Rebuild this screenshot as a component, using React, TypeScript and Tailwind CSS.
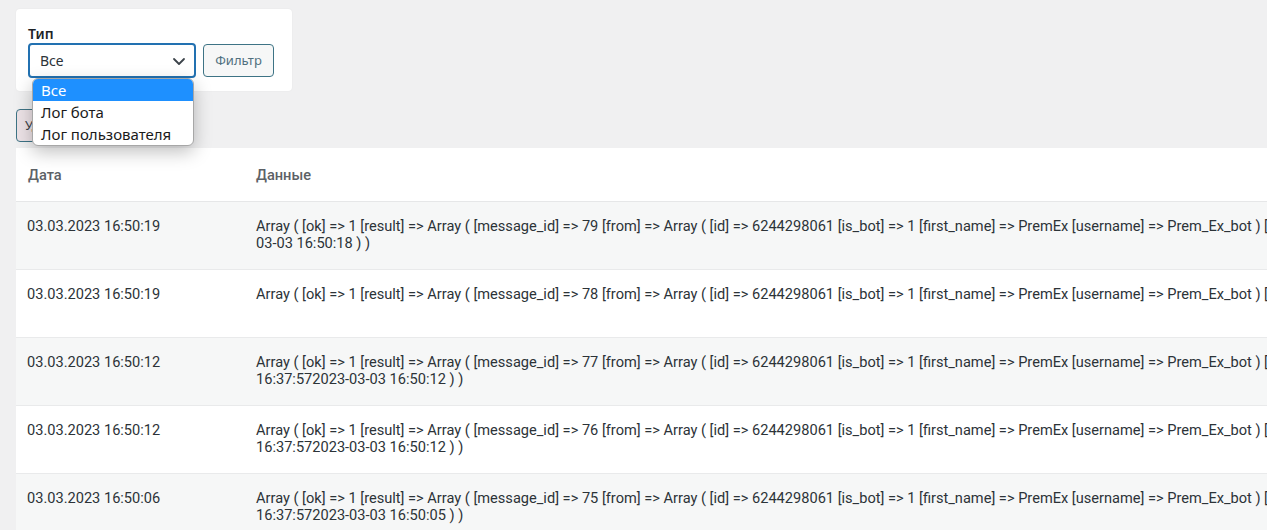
import React from 'react'

const rows = [
  {
    date: '03.03.2023 16:50:19',
    lines: [
      'Array ( [ok] => 1 [result] => Array ( [message_id] => 79 [from] => Array ( [id] => 6244298061 [is_bot] => 1 [first_name] => PremEx [username] => Prem_Ex_bot ) [chat] => Array ( [id] => 5128806401 [first_name] => Денис [type] => private ) [date] => 1677851418 [text] => 2023-',
      '03-03 16:50:18 ) )',
    ],
  },
  {
    date: '03.03.2023 16:50:19',
    lines: [
      'Array ( [ok] => 1 [result] => Array ( [message_id] => 78 [from] => Array ( [id] => 6244298061 [is_bot] => 1 [first_name] => PremEx [username] => Prem_Ex_bot ) [chat] => Array ( [id] => 5128806401 [first_name] => Денис [type] => private ) [date] => 1677851418 ) )',
    ],
  },
  {
    date: '03.03.2023 16:50:12',
    lines: [
      'Array ( [ok] => 1 [result] => Array ( [message_id] => 77 [from] => Array ( [id] => 6244298061 [is_bot] => 1 [first_name] => PremEx [username] => Prem_Ex_bot ) [chat] => Array ( [id] => 5128806401 [first_name] => Денис [type] => private ) [date] => 1677851412 [text] => 2023-03-03',
      '16:37:572023-03-03 16:50:12 ) )',
    ],
  },
  {
    date: '03.03.2023 16:50:12',
    lines: [
      'Array ( [ok] => 1 [result] => Array ( [message_id] => 76 [from] => Array ( [id] => 6244298061 [is_bot] => 1 [first_name] => PremEx [username] => Prem_Ex_bot ) [chat] => Array ( [id] => 5128806401 [first_name] => Денис [type] => private ) [date] => 1677851412 [text] => 2023-03-03',
      '16:37:572023-03-03 16:50:12 ) )',
    ],
  },
  {
    date: '03.03.2023 16:50:06',
    lines: [
      'Array ( [ok] => 1 [result] => Array ( [message_id] => 75 [from] => Array ( [id] => 6244298061 [is_bot] => 1 [first_name] => PremEx [username] => Prem_Ex_bot ) [chat] => Array ( [id] => 5128806401 [first_name] => Денис [type] => private ) [date] => 1677851406 [text] => 2023-03-03',
      '16:37:572023-03-03 16:50:05 ) )',
    ],
  },
]

const formFont = "font-['Noto_Sans','Open_Sans',sans-serif]"

export default function App() {
  return (
    <div className="relative h-[530px] w-full overflow-hidden bg-[#f0f0f1] font-['Roboto',sans-serif] text-[#2c3338]">
      <div className="pl-4 pt-[9px]">
        {/* filter card */}
        <div className={`w-[276px] rounded bg-white px-3 pt-[15px] pb-[13px] shadow-[0_0_2px_rgba(0,0,0,0.06)] ${formFont}`}>
          <div className="text-[14px] leading-[19px] font-semibold text-[#1d2327]">Тип</div>
          <div className="flex items-center gap-[7px]">
            <div className="flex h-[35px] w-[168px] items-center justify-between rounded border-2 border-[#2271b1] pl-[10px] pr-[7px] text-[14px] text-[#2c3338]">
              <span>Все</span>
              <svg width="16" height="16" viewBox="0 0 16 16" fill="none" stroke="#3c434a" strokeWidth="1.8" strokeLinecap="round" strokeLinejoin="round">
                <path d="M3 6l5 5 5-5" />
              </svg>
            </div>
            <button className="h-[33px] w-[71px] rounded border border-[#3d7385] bg-[#f6f7f7] text-[13px] text-[#50707e]">
              Фильтр
            </button>
          </div>
        </div>

        <button className={`mt-[18px] h-[33px] rounded border border-[#3d7385] bg-[#ece2e6] px-2 text-[13px] text-[#3c434a] ${formFont}`}>
          Удалить
        </button>

        {/* log table */}
        <div className="mt-[6px] w-[2400px] bg-white">
          <div className="flex h-[54px] items-center border-b border-[#e6e7e8] pt-[2px] text-[14.6px] font-medium text-[#5c6166]">
            <div className="w-[240px] pl-3">Дата</div>
            <div>Данные</div>
          </div>
          {rows.map((row, i) => (
            <div
              key={i}
              className={`flex h-[68px] border-b border-[#e9eaeb] pt-[16px] text-[14.6px] leading-[17px] ${
                i % 2 === 0 ? 'bg-[#f6f7f7]' : 'bg-white'
              }`}
            >
              <div className="w-[240px] pl-[11px] whitespace-nowrap">{row.date}</div>
              <div className="whitespace-nowrap">
                {row.lines.map((l, j) => (
                  <div key={j}>{l}</div>
                ))}
              </div>
            </div>
          ))}
        </div>
      </div>

      {/* open native select list */}
      <div className={`absolute left-8 top-[78px] w-[162px] overflow-hidden rounded-[6px] border border-[#a7a7a7] bg-white text-[15px] leading-[22px] text-[#1a1a1a] shadow-[0_6px_18px_rgba(0,0,0,0.25)] ${formFont}`}>
        <div className="bg-[#1e90ff] pl-2 text-white">Все</div>
        <div className="pl-2">Лог бота</div>
        <div className="pl-2">Лог пользователя</div>
      </div>
    </div>
  )
}
